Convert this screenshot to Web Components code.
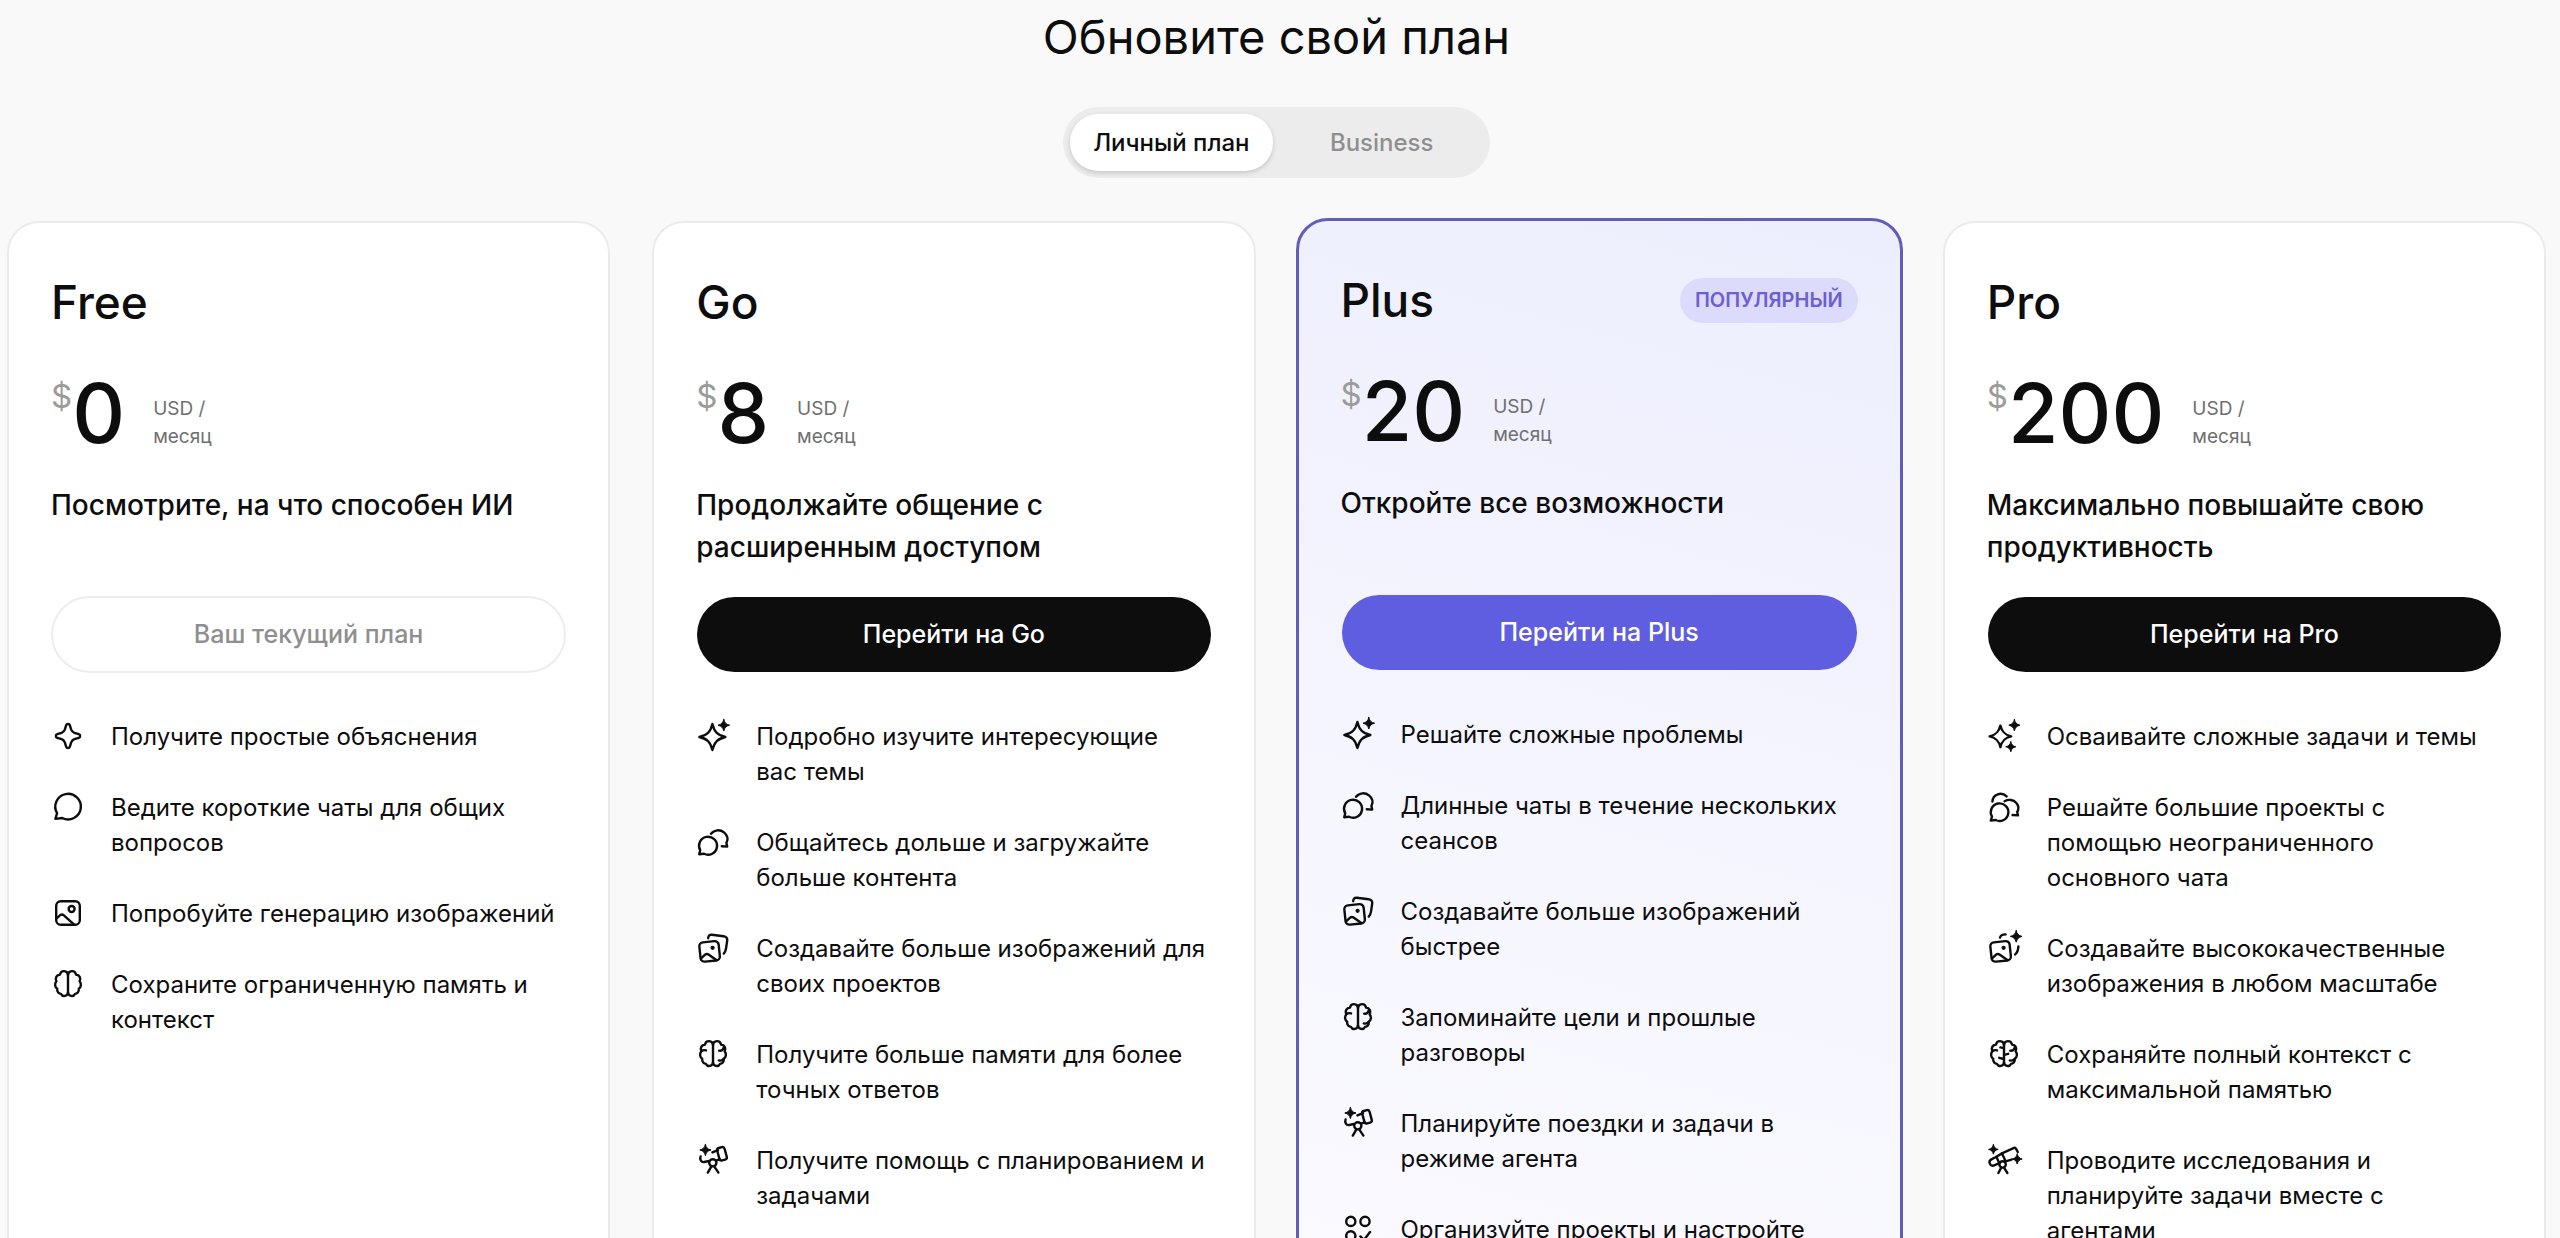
<!DOCTYPE html>
<html lang="ru">
<head>
<meta charset="utf-8">
<meta name="viewport" content="width=device-width, initial-scale=1">
<title>Обновите свой план</title>
<style>
  body {
    margin: 0;
    background: #f9f9f9;
    color: #0d0d0d;
    font-family: Inter, "Liberation Sans", sans-serif;
  }
</style>
</head>
<body>
<pricing-page>
  <span slot="title">Обновите свой план</span>
  <plan-switch slot="switch"></plan-switch>

  <plan-card name="Free" price="0" action="Ваш текущий план" variant="current">
    Посмотрите, на что способен ИИ
    <plan-feature slot="features" icon="star">Получите простые объяснения</plan-feature>
    <plan-feature slot="features" icon="chat">Ведите короткие чаты для общих вопросов</plan-feature>
    <plan-feature slot="features" icon="image">Попробуйте генерацию изображений</plan-feature>
    <plan-feature slot="features" icon="brain">Сохраните ограниченную память и контекст</plan-feature>
  </plan-card>

  <plan-card name="Go" price="8" action="Перейти на Go">
    Продолжайте общение с расширенным доступом
    <plan-feature slot="features" icon="sparkle">Подробно изучите интересующие вас&nbsp;темы</plan-feature>
    <plan-feature slot="features" icon="chats">Общайтесь дольше и загружайте больше контента</plan-feature>
    <plan-feature slot="features" icon="images">Создавайте больше изображений для своих проектов</plan-feature>
    <plan-feature slot="features" icon="brain-plus">Получите больше памяти для более точных ответов</plan-feature>
    <plan-feature slot="features" icon="telescope">Получите помощь с планированием и задачами</plan-feature>
  </plan-card>

  <plan-card name="Plus" price="20" action="Перейти на Plus" variant="popular" badge="ПОПУЛЯРНЫЙ">
    Откройте все возможности
    <plan-feature slot="features" icon="sparkle">Решайте сложные проблемы</plan-feature>
    <plan-feature slot="features" icon="chats">Длинные чаты в течение нескольких сеансов</plan-feature>
    <plan-feature slot="features" icon="images">Создавайте больше изображений быстрее</plan-feature>
    <plan-feature slot="features" icon="brain-plus">Запоминайте цели и прошлые разговоры</plan-feature>
    <plan-feature slot="features" icon="telescope">Планируйте поездки и задачи в режиме агента</plan-feature>
    <plan-feature slot="features" icon="apps">Организуйте проекты и настройте</plan-feature>
  </plan-card>

  <plan-card name="Pro" price="200" action="Перейти на Pro">
    Максимально повышайте свою продуктивность
    <plan-feature slot="features" icon="sparkles">Осваивайте сложные задачи и темы</plan-feature>
    <plan-feature slot="features" icon="chats-pro">Решайте большие проекты с помощью неограниченного основного чата</plan-feature>
    <plan-feature slot="features" icon="images-pro">Создавайте высококачественные изображения в любом масштабе</plan-feature>
    <plan-feature slot="features" icon="brain-pro">Сохраняйте полный контекст с максимальной памятью</plan-feature>
    <plan-feature slot="features" icon="telescope-pro">Проводите исследования и планируйте задачи вместе с<br>агентами</plan-feature>
  </plan-card>
</pricing-page>

<script>
  // four-pointed star around (x, y), k is how far the sides bend in
  function star(x, y, r, k = 0.14) {
    const c = r * k;
    const m = r * 0.4;
    return `M${x} ${y - r}C${x + c} ${y - m} ${x + m} ${y - c} ${x + r} ${y}` +
      `C${x + m} ${y + c} ${x + c} ${y + m} ${x} ${y + r}` +
      `C${x - c} ${y + m} ${x - m} ${y + c} ${x - r} ${y}` +
      `C${x - m} ${y - c} ${x - c} ${y - m} ${x} ${y - r}Z`;
  }

  const solidStar = (x, y, r) => `<path class="solid" d="${star(x, y, r)}"/>`;

  const brain = `
    <path d="M17 8V26"/>
    <path d="M17 8C16.5 3 10 2.8 9 7.5C5.5 8 3.8 11.2 5.4 14.2C3.4 16.6 3.8 20.2 6.2 21.8C5.8 24.8 8 26.8 10 26.9C11.6 30.2 16.6 29.2 17 25.6"/>
    <path d="M17 8C17.5 3 24 2.8 25 7.5C28.5 8 30.2 11.2 28.6 14.2C30.6 16.6 30.2 20.2 27.8 21.8C28.2 24.8 26 26.8 24 26.9C22.4 30.2 17.4 29.2 17 25.6"/>`;

  const brainFolds = `
    <path d="M5.4 14.2C6.6 13.2 8.2 12.8 10 13.4"/>
    <path d="M27.6 10.8C27.2 13 25.4 14 23.2 13.6"/>
    <path d="M27.8 21.8C26.6 23.4 24.8 24 22.8 23.4"/>`;

  const framedPicture = `
    <g transform="rotate(-6 13.6 20.4)">
      <rect x="3.9" y="10.7" width="19.4" height="19.4" rx="4"/>
      <path d="M4.4 26.4L8.8 23.2C9.9 22.4 11.2 22.5 12.2 23.4L19.4 29.6"/>
    </g>
    <circle class="dot" cx="16.6" cy="16.8" r="2.1"/>`;

  const ICONS = {
    star: `<path d="M15.2 6.2C15.7 4.4 18.3 4.4 18.8 6.2L20.2 10.6C20.8 12.2 21.8 13.2 23.4 13.8L27.8 15.2C29.6 15.7 29.6 18.3 27.8 18.8L23.4 20.2C21.8 20.8 20.8 21.8 20.2 23.4L18.8 27.8C18.3 29.6 15.7 29.6 15.2 27.8L13.8 23.4C13.2 21.8 12.2 20.8 10.6 20.2L6.2 18.8C4.4 18.3 4.4 15.7 6.2 15.2L10.6 13.8C12.2 13.2 13.2 12.2 13.8 10.6Z"/>`,
    chat: `<path d="M6.1 23.2A12.8 12.8 0 1 1 11.2 28L4.4 28.9Z"/>`,
    image: `
      <rect x="5.2" y="5.2" width="23.6" height="23.6" rx="4.6"/>
      <circle cx="20.6" cy="13" r="3"/>
      <path d="M5.6 22.4L9.2 19.2C10.2 18.3 11.6 18.3 12.6 19.2L23.2 28.6"/>`,
    brain,
    sparkle: `<path d="${star(16.4, 18, 13)}"/>${solidStar(27.8, 6.2, 5.8)}`,
    chats: `
      <path d="M4.2 25.2A9 9 0 1 1 8 28.8L3.2 29.2Z"/>
      <path d="M15 8.8C18.4 4.6 24 4.2 28 7.4C31.6 10.4 32.2 14.6 30.4 18L31.2 21.6L25.8 21.2"/>`,
    images: `${framedPicture}
      <path d="M12.2 7.2C12.4 4.6 13.6 3.6 15.8 3.8L27.6 5.2C30.4 5.6 31.6 7.2 31.2 9.6L30 17.6C29.6 20 29 21.4 27.8 22.6"/>`,
    'brain-plus': brain + brainFolds,
    telescope: `${solidStar(9.4, 7, 5.6)}
      <rect x="22.2" y="4.4" width="7.6" height="12.8" rx="2.2" transform="rotate(-15 26 10.8)"/>
      <path d="M22 7.2L16.4 9.4"/>
      <path d="M4.6 13.4C3.4 16.4 5.4 19.6 8.2 19L13 18"/>
      <path d="M20.2 17.4L24 16.4"/>
      <circle cx="16.8" cy="19.8" r="3.6"/>
      <path d="M15.4 23.4L11.8 29.6M18.2 23.4L22.4 29.6"/>`,
    apps: `
      <circle cx="9.8" cy="9.4" r="4.6"/>
      <circle cx="24" cy="9.4" r="4.6"/>
      <circle cx="9.8" cy="23.8" r="4.6"/>
      <path d="M19.4 24.4L23 28L29 20"/>`,
    sparkles: `<path d="${star(13.4, 17.4, 10.8)}"/>${solidStar(27.4, 6.2, 5.6)}${solidStar(23.8, 27.8, 5)}`,
    'chats-pro': `
      <path d="M5 26.6A8.8 8.8 0 1 1 8.6 30L3.8 30.6Z"/>
      <path d="M17.6 11.2C21.4 9 26.4 9.6 29.4 13C31.8 16 31.8 19.4 30.2 22L31 25.4L25.6 25"/>
      <path d="M5.4 11.6C5.8 4 14.6 1.4 19.6 6.4"/>`,
    'images-pro': `${framedPicture}${solidStar(29.2, 5.4, 5.8)}
      <path d="M13 6.6C13.6 4.4 15.6 3.4 18.6 3.4"/>
      <path d="M31.4 15.4C31.2 19 30.4 21.6 28.2 23.4"/>`,
    'brain-pro': `${brain}${brainFolds}
      <path d="M17 11.2L13.4 10.4M17 22L12.2 20.8M17 17.8L21.2 16.8"/>`,
    'telescope-pro': `${solidStar(6.4, 6.4, 4.8)}${solidStar(30.2, 16, 5)}
      <path d="M9.4 13.8L4 16.6C1 18.4 3 23.4 6.4 22.6L12 20.4"/>
      <path d="M9.4 13.8L12.4 20.4M9.4 13.8L15 10.4L18.6 18.2"/>
      <path d="M15 10.4L27 4.8C28.4 4.2 29.2 5.6 30.8 9"/>
      <path d="M19.4 18.2L24.6 16.6"/>
      <circle cx="15.6" cy="21.4" r="3.2"/>
      <path d="M14.2 24.6L11.4 30M17 24.6L20.4 30"/>`,
  };

  class PlanIcon extends HTMLElement {
    constructor() {
      super();
      this.attachShadow({ mode: 'open' });
    }

    connectedCallback() {
      this.shadowRoot.innerHTML = `
        <style>
          :host { display: block; width: 34px; height: 34px; }
          svg {
            display: block;
            overflow: visible;
            fill: none;
            stroke: currentColor;
            stroke-width: 2.4;
            stroke-linecap: round;
            stroke-linejoin: round;
          }
          .solid { fill: currentColor; stroke-width: 1; }
          .dot { fill: currentColor; stroke: none; }
        </style>
        <svg width="34" height="34" viewBox="0 0 34 34" aria-hidden="true">${ICONS[this.getAttribute('name')] || ''}</svg>
      `;
    }
  }

  class PlanFeature extends HTMLElement {
    constructor() {
      super();
      this.attachShadow({ mode: 'open' });
    }

    connectedCallback() {
      this.setAttribute('role', 'listitem');
      this.shadowRoot.innerHTML = `
        <style>
          :host { display: flex; gap: 26px; font-size: 24px; line-height: 35px; }
          plan-icon { flex: none; }
        </style>
        <plan-icon name="${this.getAttribute('icon')}"></plan-icon>
        <span><slot></slot></span>
      `;
    }
  }

  class PlanSwitch extends HTMLElement {
    constructor() {
      super();
      this.attachShadow({ mode: 'open' });
      this.shadowRoot.innerHTML = `
        <style>
          :host { display: block; }
          .track {
            display: grid;
            grid-template-columns: 1fr 1fr;
            gap: 8px;
            padding: 7px;
            border-radius: 36px;
            background: #ececec;
          }
          button {
            padding: 0 23px;
            border: 0;
            border-radius: 28px;
            background: none;
            color: #8f8f8f;
            font: 500 24px/57px Inter, "Liberation Sans", sans-serif;
            white-space: nowrap;
            cursor: pointer;
          }
          button[aria-pressed="true"] {
            background: #fff;
            color: #0d0d0d;
            box-shadow: 0 2px 5px rgba(0, 0, 0, 0.16);
          }
        </style>
        <div class="track" role="group">
          <button type="button" aria-pressed="true">Личный план</button>
          <button type="button" aria-pressed="false">Business</button>
        </div>
      `;
      const buttons = this.shadowRoot.querySelectorAll('button');
      buttons.forEach(button => button.addEventListener('click', () => {
        buttons.forEach(b => b.setAttribute('aria-pressed', String(b === button)));
      }));
    }
  }

  class PlanCard extends HTMLElement {
    constructor() {
      super();
      this.attachShadow({ mode: 'open' });
    }

    connectedCallback() {
      const badge = this.getAttribute('badge');
      const current = this.getAttribute('variant') === 'current';
      this.shadowRoot.innerHTML = `
        <style>
          :host {
            display: block;
            box-sizing: border-box;
            padding: 51px 42px;
            border: 2px solid #ebebeb;
            border-radius: 32px;
            background: #fff;
          }
          :host([variant="popular"]) {
            margin: -3px -2px 0;
            border: 3px solid #615eb9;
            background: linear-gradient(195deg, #edeefd, #f5f5ff 50%, #fbfaff);
          }
          header {
            display: flex;
            align-items: center;
            justify-content: space-between;
            height: 56px;
            margin-bottom: 42px;
          }
          h2 { margin: 0; font-size: 46px; font-weight: 500; line-height: 56px; }
          .badge {
            padding: 0 15px;
            border-radius: 23px;
            background: #dddbfb;
            color: #6c60d0;
            font-size: 20px;
            font-weight: 600;
            line-height: 45px;
          }
          .price { display: flex; margin-bottom: 28px; }
          .currency { color: #9b9b9b; font-size: 33px; line-height: 48px; }
          .amount { font-size: 82px; font-weight: 500; line-height: 84px; }
          .unit {
            align-self: flex-end;
            margin-left: 28px;
            padding-bottom: 5px;
            color: #6f6f6f;
            font-size: 19px;
            line-height: 28px;
          }
          .summary {
            min-height: 84px;
            margin: 0 0 28px;
            font-size: 28px;
            font-weight: 500;
            line-height: 42px;
          }
          button {
            display: block;
            box-sizing: border-box;
            width: 100%;
            margin-bottom: 46px;
            padding: 0;
            border: 1px solid transparent;
            border-radius: 39px;
            background: #0d0d0d padding-box;
            color: #fff;
            font: 500 25px/75px Inter, "Liberation Sans", sans-serif;
            cursor: pointer;
          }
          :host([variant="popular"]) button { background-color: #5f5de0; }
          :host([variant="current"]) button {
            border: 2px solid #ededed;
            background: none;
            color: #8f8f8f;
            line-height: 73px;
            cursor: default;
          }
          .features { display: grid; gap: 36px; }
        </style>
        <header>
          <h2>${this.getAttribute('name')}</h2>
          ${badge ? `<span class="badge">${badge}</span>` : ''}
        </header>
        <div class="price">
          <span class="currency">$</span>
          <span class="amount">${this.getAttribute('price')}</span>
          <span class="unit">USD /<br>месяц</span>
        </div>
        <p class="summary"><slot></slot></p>
        <button type="button" ${current ? 'disabled' : ''}>${this.getAttribute('action')}</button>
        <div class="features" role="list"><slot name="features"></slot></div>
      `;
    }
  }

  class PricingPage extends HTMLElement {
    constructor() {
      super();
      this.attachShadow({ mode: 'open' });
      this.shadowRoot.innerHTML = `
        <style>
          :host {
            display: block;
            height: 100vh;
            overflow-y: auto;
            scrollbar-width: none;
          }
          main {
            display: flex;
            flex-direction: column;
            box-sizing: border-box;
            min-height: 110vh;
            padding: 9px 14px 42px 7px;
          }
          h1 {
            margin: 0 0 42px;
            font-size: 47px;
            font-weight: 400;
            line-height: 56px;
            text-align: center;
          }
          .switch { align-self: center; margin-bottom: 43px; }
          .plans {
            display: grid;
            flex: 1;
            grid-template-columns: repeat(auto-fit, minmax(480px, 1fr));
            gap: 42px;
          }
        </style>
        <main>
          <h1><slot name="title"></slot></h1>
          <div class="switch"><slot name="switch"></slot></div>
          <section class="plans"><slot></slot></section>
        </main>
      `;
    }
  }

  customElements.define('plan-icon', PlanIcon);
  customElements.define('plan-feature', PlanFeature);
  customElements.define('plan-switch', PlanSwitch);
  customElements.define('plan-card', PlanCard);
  customElements.define('pricing-page', PricingPage);
</script>
</body>
</html>
